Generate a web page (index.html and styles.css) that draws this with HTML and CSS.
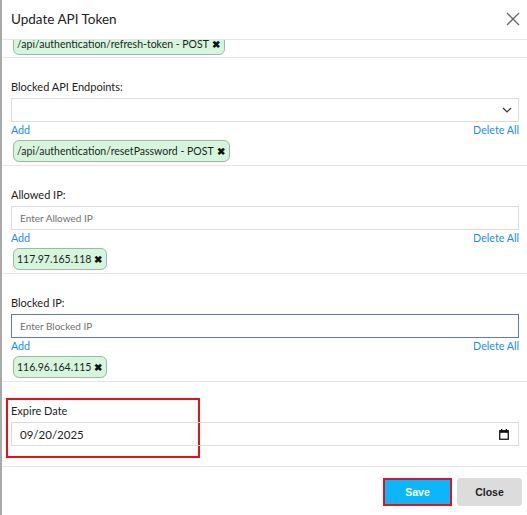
FILE: index.html
```html
<!DOCTYPE html>
<html lang="en">
<head>
<meta charset="utf-8">
<title>Update API Token</title>
<link rel="stylesheet" href="styles.css">
</head>
<body>
<div class="modal">
  <div class="modal-header">
    <h1 class="modal-title">Update API Token</h1>
    <button class="close-x" aria-label="Close">
      <svg width="14" height="14" viewBox="0 0 14 14"><path d="M1 1L13 13M13 1L1 13" stroke="#666" stroke-width="1.3" fill="none"/></svg>
    </button>
  </div>
  <div class="modal-body">
    <div class="section first">
      <span class="chip">/api/authentication/refresh-token - POST <b>✖</b></span>
    </div>
    <div class="section">
      <label class="label">Blocked API Endpoints:</label>
      <div class="field select">
        <svg class="chev" width="10" height="6" viewBox="0 0 10 6"><path d="M1 1L5 5L9 1" stroke="#333" stroke-width="1.2" fill="none"/></svg>
      </div>
      <div class="links"><a>Add</a><a>Delete All</a></div>
      <div class="chips"><span class="chip">/api/authentication/resetPassword - POST <b>✖</b></span></div>
    </div>
    <div class="section">
      <label class="label">Allowed IP:</label>
      <div class="field"><span class="ph">Enter Allowed IP</span></div>
      <div class="links"><a>Add</a><a>Delete All</a></div>
      <div class="chips"><span class="chip">117.97.165.118 <b>✖</b></span></div>
    </div>
    <div class="section">
      <label class="label">Blocked IP:</label>
      <div class="field focused"><span class="ph">Enter Blocked IP</span></div>
      <div class="links"><a>Add</a><a>Delete All</a></div>
      <div class="chips"><span class="chip">116.96.164.115 <b>✖</b></span></div>
    </div>
    <div class="section expire">
      <div class="highlight"></div>
      <label class="label">Expire Date</label>
      <div class="field date">
        <span class="val">09/20/2025</span>
        <svg class="cal" width="10" height="11" viewBox="0 0 10 11"><rect x="0.75" y="1.75" width="8.5" height="8.5" fill="none" stroke="#111" stroke-width="1.3"/><rect x="0.75" y="1.5" width="8.5" height="2.3" fill="#111"/><rect x="2" y="0" width="1.3" height="2" fill="#111"/><rect x="6.7" y="0" width="1.3" height="2" fill="#111"/></svg>
      </div>
    </div>
  </div>
  <div class="modal-footer">
    <span class="save-wrap"><button class="btn save">Save</button></span>
    <button class="btn close">Close</button>
  </div>
</div>
</body>
</html>
```
FILE: styles.css
```css
html, body {
  margin: 0;
  padding: 0;
  background: #fff;
}
body {
  font-family: Lato, "Liberation Sans", sans-serif;
  color: #222;
}
.modal {
  height: 515px;
  border-left: 2px solid #a9a9a9;
  box-sizing: border-box;
  display: flex;
  flex-direction: column;
  overflow: hidden;
}
.modal-header {
  height: 39px;
  border-bottom: 1px solid #e6e6e6;
  display: flex;
  align-items: center;
  justify-content: space-between;
  padding: 0 6px 0 9px;
  flex: none;
}
.modal-title {
  margin: 0;
  font-size: 13.5px;
  font-weight: 400;
  color: #222;
  padding-bottom: 1px;
}
.close-x {
  border: 0;
  background: none;
  padding: 0;
  width: 16px;
  height: 16px;
  display: flex;
  align-items: center;
  justify-content: center;
  margin-top: -1px;
}
.modal-body {
  flex: none;
  overflow: hidden;
}
.section {
  border-bottom: 1px solid #e6e6e6;
  padding: 20px 8px 3px 9px;
  display: flex;
  flex-direction: column;
}
.section.first {
  padding-top: 0;
  margin-top: -7px;
  padding-bottom: 2px;
}
.label {
  font-size: 11px;
  line-height: 18px;
  margin-bottom: 2px;
}
.field {
  height: 24px;
  box-sizing: border-box;
  border: 1px solid #dcdcdc;
  display: flex;
  align-items: center;
  padding: 0 8px;
  position: relative;
}
.field.focused {
  border-color: #6874b4;
}
.ph {
  font-size: 10px;
  color: #6f6f6f;
}
.select {
  justify-content: flex-end;
}
.chev {
  margin-right: -2px;
}
.links {
  display: flex;
  justify-content: space-between;
  height: 16px;
  font-size: 10.7px;
  line-height: 16px;
  color: #1a8cf0;
}
.chips {
  display: flex;
  margin-top: 2px;
}
.chip {
  align-self: flex-start;
  display: inline-flex;
  align-items: center;
  gap: 3px;
  height: 22px;
  box-sizing: border-box;
  margin-left: 2px;
  padding: 0 4px 0 3px;
  background: #d5f5dc;
  border: 1px solid #9fb8a3;
  border-radius: 6px;
  font-size: 10.5px;
  color: #1f1f1f;
  white-space: nowrap;
}
.chip b {
  font-size: 9.5px;
  color: #111;
}
.section.expire {
  position: relative;
  padding-top: 20px;
  padding-bottom: 20px;
}
.highlight {
  position: absolute;
  left: 4px;
  top: 16px;
  width: 194px;
  height: 60px;
  box-sizing: border-box;
  border: 2px solid #e3121b;
}
.date {
  justify-content: space-between;
}
.val {
  font-size: 11.5px;
  color: #222;
}
.cal {
  margin-right: 1px;
}
.modal-footer {
  display: flex;
  justify-content: flex-end;
  align-items: center;
  gap: 5px;
  padding: 11px 5px 0 0;
}
.save-wrap {
  border: 2px solid #e3121b;
  display: flex;
}
.btn {
  font-family: "Liberation Sans", Arial, sans-serif;
  font-weight: 700;
  font-size: 10.5px;
  border: 0;
  border-radius: 3px;
}
.save {
  width: 65px;
  height: 24px;
  background: #0cb6fb;
  color: #fff;
  border-radius: 0;
}
.close {
  width: 65px;
  height: 28px;
  background: #dcdcdc;
  color: #222;
  border-radius: 4px;
}
```
